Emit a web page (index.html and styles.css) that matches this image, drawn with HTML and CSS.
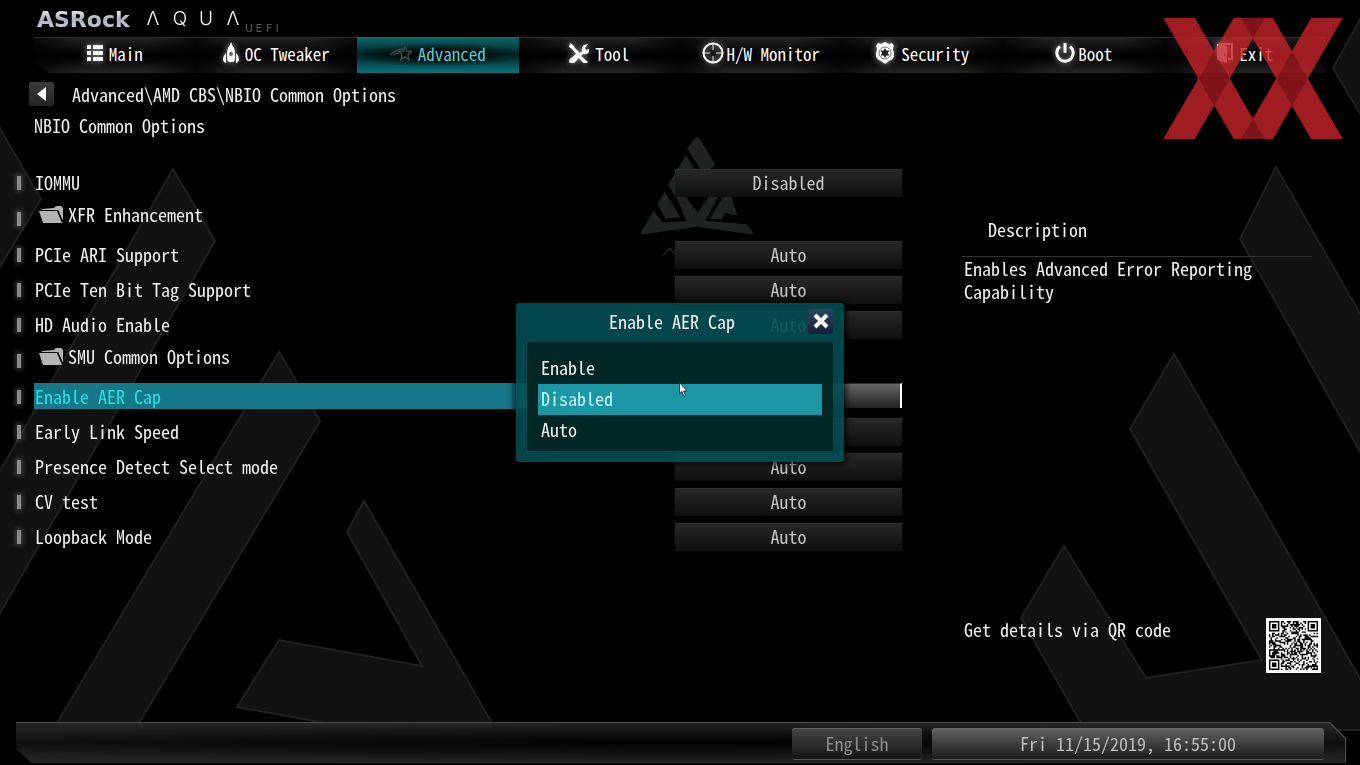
FILE: index.html
```html
<!DOCTYPE html>
<html lang="en">
<head>
  <meta charset="UTF-8">
  <title>UEFI Setup - NBIO Common Options</title>
  <meta name="viewport" content="width=device-width, initial-scale=1.0">
  <link rel="stylesheet" href="styles.css">
</head>
<body>
  <!-- Background artwork -->
  <svg class="backdrop" viewBox="0 0 1360 765" preserveAspectRatio="xMidYMid slice" aria-hidden="true">
    <g fill="#111" stroke="#202020" stroke-width="2">
      <path d="M-2 125 41 199-2 270z"/>
      <path d="M173 169 215 241-4 620V478z"/>
      <path d="M279 352 320 421 139 723H57z"/>
      <path d="M364 501 347 532 422 666 279 640 237 707 325 723H492z"/>
      <path d="M1362 16 1333 68 1362 117z"/>
      <path d="M1276 167 1240 239 1362 455V317z"/>
      <path d="M1174 354 1362 682V730H1085L1021 618 1064 546 1146 678 1262 660 1130 429z"/>
    </g>
    <g fill="#1f2323" transform="translate(630 130) scale(.33333)">
      <path d="M193 27q8-10 17 0l45 77-14 14h-30l-40-62z"/>
      <path d="M168 75 194 118 170 190 134 196 114 165z"/>
      <path d="M104 185 152 262 106 266 82 222z"/>
      <path d="M70 243 98 277 170 274 138 200 168 200 203 248 236 200 264 200 226 272 350 283 370 308q0 5-8 5L203 290 40 313q-9 0-7-7z"/>
      <path d="M240 268 278 200 305 200 322 256 286 250 276 268z"/>
      <path d="M99 377 119 355 137 374" fill="none" stroke="#252828" stroke-width="4"/>
    </g>
  </svg>

  <header>
    <svg class="logo" viewBox="0 0 250 26" role="img" aria-label="ASRock AQUA UEFI">
      <defs>
        <linearGradient id="chrome" x1="0" y1="0" x2="0" y2="1">
          <stop offset="0" stop-color="#fff"/>
          <stop offset=".5" stop-color="#aab0bd"/>
          <stop offset="1" stop-color="#d5dcf0"/>
        </linearGradient>
      </defs>
      <text class="logo-brand" x="1" y="19" fill="url(#chrome)">ASRock</text>
      <text class="logo-series" x="117 144 170 197" y="17">ΛQUΛ</text>
      <text class="logo-uefi" x="213 223 233 241" y="24">UEFI</text>
    </svg>

    <nav class="tabs">
      <a class="tab" href="#main">
        <svg width="16" height="16" viewBox="0 0 16 16"><path d="M0 0h4v4H0zM6 0h10v4H6zM0 6h4v4H0zM6 6h10v4H6zM0 12h4v4H0zM6 12h10v4H6z"/></svg>
        Main
      </a>
      <a class="tab" href="#oc">
        <svg width="16" height="22" viewBox="0 0 16 22"><path fill-rule="evenodd" d="M8 0q1 2 1 3 3 3 3 7v6q0 3-2 4H6q-2-1-2-4v-6q0-4 3-7 0-1 1-3zM8 10a2 2 0 1 0 0 4 2 2 0 0 0 0-4z"/><path d="M3 11v10q-3-1-3-4t3-6zM13 11v10q3-1 3-4t-3-6z"/></svg>
        OC Tweaker
      </a>
      <a class="tab active" href="#advanced">
        <svg width="22" height="16" viewBox="0 0 22 16"><path d="M15 2l2 4 5 .500-4 3 1 5-4-2.500-4 2.500 1-5-3-3 4.500-.500zM0 10Q6 4 13 4M3 10q3-2 6-2" fill="none" stroke="#3a4a4b" stroke-width="1.500"/></svg>
        Advanced
      </a>
      <a class="tab" href="#tool">
        <svg width="20" height="20" viewBox="0 0 20 20"><path d="M1 0l3 2 2 3 5 5 2-2q-1-4 2-6l4-1-3 4 1 2 3-1 0 3q-2 3-6 2l-2 2 7 6-3 3-6-7-5 5q-2 2-4 0t0-4l6-5-4-5-3-2z"/></svg>
        Tool
      </a>
      <a class="tab tight" href="#monitor">
        <svg width="22" height="22" viewBox="0 0 22 22"><path d="M11 2v6M11 14v6M2 11h6M14 11h6" stroke="#aaa" stroke-width="1.500"/><circle cx="11" cy="11" r="9.500" fill="none" stroke="#fff" stroke-width="2"/></svg>
        H/W Monitor
      </a>
      <a class="tab" href="#security">
        <svg width="20" height="22" viewBox="0 0 20 22"><path d="M3 1l3 1 4-2 4 2 3-1 2 3q-2 3 0 7 1 6-5 8l-4 3-4-3q-6-2-5-8 2-4 0-7z"/><circle cx="10" cy="11" r="6" fill="#fff" stroke="#777"/><path fill="#222" d="M10 6l1.400 2.600 3-.100-1.500 2.500 1.500 2.500-3-.100L10 16l-1.400-2.600-3 .100L7.100 11 5.600 8.500l3 .100z"/></svg>
        Security
      </a>
      <a class="tab tight" href="#boot">
        <svg width="20" height="22" viewBox="0 0 20 22"><path d="M5 4.500a8.200 8.200 0 1 0 10 0M10 1v10" fill="none" stroke="#fff" stroke-width="3"/></svg>
        Boot
      </a>
      <a class="tab" href="#exit">
        <svg width="16" height="20" viewBox="0 0 16 20"><path fill-rule="evenodd" d="M0 1l10 2v17L0 17zM7 10v3h1v-3z"/><path d="M2 1h13v15h-4" fill="none" stroke="#fff" stroke-width="2"/></svg>
        Exit
      </a>
    </nav>

    <div class="breadcrumb">
      <button class="back" type="button" aria-label="Back"><svg width="10" height="14" viewBox="0 0 10 14"><path d="M9 0v14L0 7z"/></svg></button>
      <span>Advanced\AMD CBS\NBIO Common Options</span>
    </div>
    <h1>NBIO Common Options</h1>
  </header>

  <main>
    <div class="settings">
      <div class="row">
        <i class="marker"></i><label for="iommu">IOMMU</label>
        <button class="value" type="button" id="iommu">Disabled</button>
      </div>
      <div class="row folder">
        <i class="marker"></i>
        <a href="#xfr"><svg width="24" height="17" viewBox="0 0 24 17"><path d="M3 4V3l12-1q1-2 3-2h4l2 2v12l-1-1-4-9z"/><path d="M0 5l18 0 5 12H4z"/><path d="M2 4.500h17l4 10" fill="none" stroke="#111"/></svg>XFR Enhancement</a>
      </div>
      <div class="row">
        <i class="marker"></i><label for="ari">PCIe ARI Support</label>
        <button class="value" type="button" id="ari">Auto</button>
      </div>
      <div class="row">
        <i class="marker"></i><label for="tenbit">PCIe Ten Bit Tag Support</label>
        <button class="value" type="button" id="tenbit">Auto</button>
      </div>
      <div class="row">
        <i class="marker"></i><label for="hdaudio">HD Audio Enable</label>
        <button class="value" type="button" id="hdaudio">Auto</button>
      </div>
      <div class="row folder">
        <i class="marker"></i>
        <a href="#smu"><svg width="24" height="17" viewBox="0 0 24 17"><path d="M3 4V3l12-1q1-2 3-2h4l2 2v12l-1-1-4-9z"/><path d="M0 5l18 0 5 12H4z"/><path d="M2 4.500h17l4 10" fill="none" stroke="#111"/></svg>SMU Common Options</a>
      </div>
      <div class="row selected">
        <i class="marker"></i><label for="aer">Enable AER Cap</label>
        <button class="value" type="button" id="aer" aria-haspopup="listbox"></button>
      </div>
      <div class="row">
        <i class="marker"></i><label for="link">Early Link Speed</label>
        <button class="value" type="button" id="link"></button>
      </div>
      <div class="row">
        <i class="marker"></i><label for="presence">Presence Detect Select mode</label>
        <button class="value" type="button" id="presence">Auto</button>
      </div>
      <div class="row">
        <i class="marker"></i><label for="cv">CV test</label>
        <button class="value" type="button" id="cv">Auto</button>
      </div>
      <div class="row">
        <i class="marker"></i><label for="loopback">Loopback Mode</label>
        <button class="value" type="button" id="loopback">Auto</button>
      </div>
    </div>

    <aside>
      <h2>Description</h2>
      <p class="help">Enables Advanced Error Reporting Capability</p>
      <div class="qr-row">
        <span>Get details via QR code</span>
        <svg class="qr" viewBox="-2 -2 37 37" role="img" aria-label="QR code"><path id="qr-modules"/></svg>
      </div>
    </aside>
  </main>

  <footer>
    <button class="language" type="button">English</button>
    <button class="clock" type="button">Fri 11/15/2019, 16:55:00</button>
  </footer>

  <div class="overlay">
    <div class="popup" role="dialog" aria-labelledby="popup-title">
      <div class="popup-head">
        <h3 id="popup-title">Enable AER Cap</h3>
        <button class="close" type="button" aria-label="Close"><svg width="16" height="16" viewBox="0 0 16 16"><path d="M2 2l12 12M14 2 2 14"/></svg></button>
      </div>
      <div class="options">
        <button type="button">Enable</button>
        <button type="button" class="current">Disabled</button>
        <button type="button">Auto</button>
      </div>
      <svg class="cursor" width="9" height="15" viewBox="0 0 9 15" aria-hidden="true"><path d="M.500.500v11l2.500-2 2 5 1.500-1-2-4.500h3.500z" fill="#fff" stroke="#123" stroke-width=".800"/></svg>
    </div>
  </div>

  <!-- Watermark -->
  <svg class="watermark" viewBox="788 54 540 364" aria-hidden="true">
    <g fill="#c32329">
      <path d="M788 54h95l210 364h-93z"/>
      <path d="M788 418h95l210-364h-93z"/>
      <path d="M1022 54h96l210 364h-95z"/>
      <path d="M1022 418h96l210-364h-95z"/>
    </g>
    <path fill="#9c1a1e" d="M941 155 988 237 941 319 895 237zM1175 155 1222 237 1175 319 1128 237zM1022 54h71l-35 62zM1022 418h71l-35-62z"/>
  </svg>

  <script src="script.js"></script>
</body>
</html>
```
FILE: styles.css
```css
* {
  box-sizing: border-box;
}
body {
  margin: 0;
  min-height: 100vh;
  display: flex;
  flex-direction: column;
  background: #000;
  color: #f0f0f0;
  font-family: "Noto Sans Mono CJK SC", "Liberation Mono", monospace;
  font-size: 18px;
  line-height: 23px;
  overflow: hidden;
}
h1, h2, h3, p {
  margin: 0;
  font-size: 18px;
  font-weight: normal;
}
button {
  font: inherit;
  color: inherit;
  border: none;
  padding: 0;
  cursor: pointer;
}
a {
  color: inherit;
  text-decoration: none;
}
svg {
  fill: currentColor;
  flex: none;
}
.backdrop {
  position: fixed;
  inset: 0;
  width: 100%;
  height: 100%;
  z-index: -1;
}

/* Header */
.logo {
  display: block;
  width: 250px;
  height: 26px;
  margin: 8px 0 3px 36px;
}
.logo-brand {
  font: bold 22px "DejaVu Sans", sans-serif;
}
.logo-series {
  font: 300 19px Inter, sans-serif;
  text-anchor: middle;
  fill: #fff;
}
.logo-uefi {
  font: 11px "DejaVu Sans", sans-serif;
  text-anchor: middle;
  fill: #555;
}
.tabs {
  display: flex;
  height: 36px;
  margin: 0 34px;
  font-size: 17px;
  clip-path: polygon(0 0, 100% 0, 100% 100%, 14px 100%, 0 24px);
}
.tab {
  flex: 1;
  display: flex;
  align-items: center;
  justify-content: center;
  gap: 6px;
  padding-bottom: 5px;
  color: #fff;
  white-space: nowrap;
  border-top: 1px solid #2c2c2c;
  background:
    linear-gradient(90deg, rgba(0,0,0,0.7), transparent 30%, transparent 70%, rgba(0,0,0,0.7)),
    linear-gradient(#222, #000 50%, #060606 60%, #252525);
}
.tab.tight {
  gap: 3px;
}
.tab svg {
  filter: drop-shadow(0 0 3px rgba(255,255,255,0.6));
}
.tab.active {
  color: #4fd0d2;
  border-top-color: #2a6266;
  background:
    radial-gradient(ellipse 55% 34% at 50% 48%, #000 20%, transparent),
    linear-gradient(#0a6469, #05282b 45%, #053538 60%, #07747b);
}
.tab.active svg {
  filter: none;
}
.breadcrumb {
  display: flex;
  align-items: center;
  gap: 18px;
  margin: 9px 0 8px 29px;
}
.back {
  display: grid;
  place-items: center;
  width: 25px;
  height: 24px;
  border-radius: 2px;
  background: linear-gradient(#3c3c3c, #242424);
  color: #fff;
}
h1 {
  margin-left: 34px;
}

/* Settings list */
main {
  flex: 1;
  display: grid;
  grid-template-columns: 1fr 359px;
  gap: 60px;
  padding: 32px 39px 0 16px;
}
.settings {
  display: flex;
  flex-direction: column;
  gap: 7px;
}
.row {
  display: grid;
  grid-template-columns: 18px 1fr 227px;
  align-items: center;
  height: 28px;
}
.row label {
  align-self: start;
  margin-right: 12px;
  padding-left: 1px;
  line-height: 26px;
}
.marker {
  width: 4px;
  height: 14px;
  margin-left: 1px;
  background: #8a8a8a;
  box-shadow: 0 0 4px 2px rgba(120,120,120,0.4);
}
.folder {
  grid-template-columns: 18px 1fr;
  height: 30px;
}
.folder a {
  align-self: start;
  display: flex;
  align-items: center;
  gap: 5px;
  padding-left: 5px;
  line-height: 21px;
}
.folder svg {
  color: #b4b4b4;
}
.value {
  height: 28px;
  padding-bottom: 2px;
  background: linear-gradient(#272727, #0f0f0f);
  border-top: 1px solid #2e2e2e;
  color: #c4c4c4;
}
.selected label {
  background: #15798a;
  color: #2fdde0;
}
.selected .value {
  align-self: start;
  height: 25px;
  background: linear-gradient(#666, #222);
  border-right: 2px solid #fff;
}

/* Description panel */
aside {
  display: flex;
  flex-direction: column;
  padding: 49px 0;
}
h2 {
  padding-left: 26px;
  padding-bottom: 15px;
  margin-right: 9px;
  border-bottom: 1px solid #333;
}
.help, .qr-row {
  padding-left: 2px;
}
.help {
  margin-right: 30px;
}
.qr-row {
  margin-top: auto;
  display: flex;
  justify-content: space-between;
}
.qr {
  width: 55px;
  height: 55px;
  background: #fff;
  color: #000;
}

/* Bottom bar */
footer {
  position: relative;
  display: flex;
  justify-content: flex-end;
  gap: 10px;
  height: 43px;
  margin: 0 14px 0 16px;
  padding: 6px 22px 5px 0;
}
footer::before, footer::after {
  content: "";
  position: absolute;
  z-index: -1;
  inset: 0 0 2px 0;
  background: #4a4a4a;
  clip-path: polygon(0 0, calc(100% - 16px) 0, 100% 16px, 100% 100%, 16px 100%, 0 26px);
}
footer::after {
  inset: 1px 1px 2px 0;
  background:
    radial-gradient(ellipse 60% 50% at 50% 50%, rgba(0,0,0,0.8), transparent),
    linear-gradient(#262626, #111 50%, #262626);
}
footer button {
  padding-bottom: 2px;
  border-radius: 3px;
  border-top: 1px solid #666;
  border-bottom: 1px solid #555;
}
.language {
  width: 130px;
  background: linear-gradient(#444, #161616);
  color: #8c8c8c;
}
.clock {
  width: 392px;
  background: linear-gradient(#606060, #1c1c1c);
  color: #bdbdbd;
}

/* Popup */
.overlay {
  position: fixed;
  inset: 0;
  display: grid;
  place-items: center;
}
.popup {
  position: relative;
  width: 328px;
  padding: 0 11px 11px;
  border-radius: 3px;
  background: rgba(2,78,84,0.9);
  box-shadow: 0 0 6px 2px rgba(0,0,0,0.8);
}
.popup-head {
  display: flex;
  align-items: center;
  height: 39px;
  padding-left: 9px;
  padding-bottom: 3px;
}
h3 {
  flex: 1;
  text-align: center;
}
.close {
  display: grid;
  place-items: center;
  width: 25px;
  height: 25px;
  border-radius: 3px;
  background: linear-gradient(#2c4460, #14213c);
}
.close path {
  stroke: #fff;
  stroke-width: 4;
}
.options {
  display: flex;
  flex-direction: column;
  padding: 11px 11px 5px;
  background: rgba(0,36,35,0.96);
}
.options button {
  height: 31px;
  padding: 0 0 2px 3px;
  text-align: left;
  background: none;
}
.options .current {
  background: #1b96a5;
  color: #c8f7f7;
}
.cursor {
  position: absolute;
  left: 163px;
  top: 79px;
}
.watermark {
  position: absolute;
  top: 18px;
  right: 17px;
  width: 180px;
  height: 121px;
  opacity: 0.82;
  pointer-events: none;
}
```
FILE: script.js
```javascript
// Fill the QR symbol: 33 x 33 modules with three finder squares
const SIZE = 33;
let seed = 20191115;

function nextBit() {
  seed = (seed * 1103515245 + 12345) % 2147483648;
  return (seed >> 16) & 1;
}

function finder(x, y) {
  const dx = Math.abs(x - 3);
  const dy = Math.abs(y - 3);
  const ring = Math.max(dx, dy);
  return ring === 3 || ring <= 1;
}

let path = '';
for (let y = 0; y < SIZE; y++) {
  for (let x = 0; x < SIZE; x++) {
    let on = nextBit();
    if (x < 8 && y < 8) on = x < 7 && y < 7 && finder(x, y);
    if (x > 24 && y < 8) on = x > 25 && y < 7 && finder(x - 26, y);
    if (x < 8 && y > 24) on = x < 7 && y > 25 && finder(x, y - 26);
    if (on) path += `M${x} ${y}h1v1h-1z`;
  }
}
document.getElementById('qr-modules').setAttribute('d', path);
```
